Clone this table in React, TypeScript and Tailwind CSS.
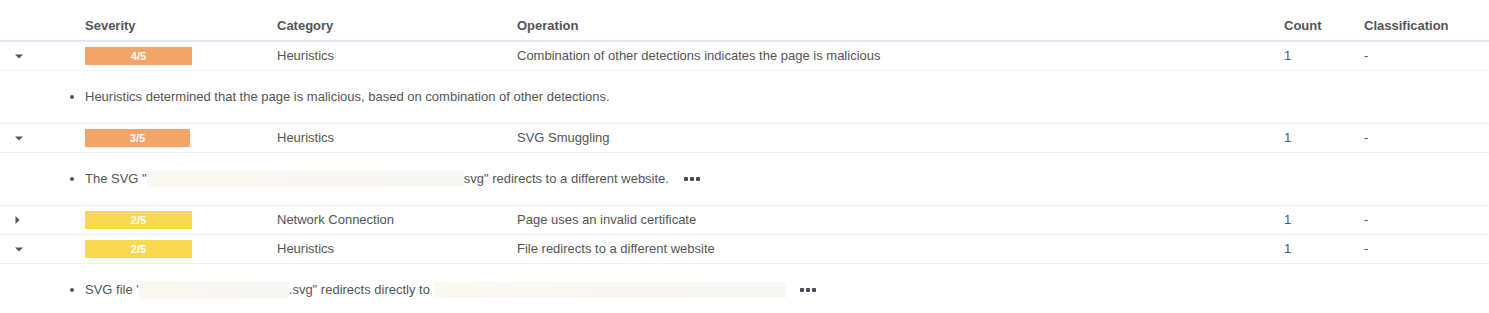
import React from 'react';

type Row = {
    severity: string;
    color: 'orange' | 'yellow';
    badgeWidth: string;
    category: string;
    operation: string;
    count: number;
    open: boolean;
    detail?: React.ReactNode;
};

const Redacted = ({ w }: { w: string }) => (
    <span className={`inline-block h-[16px] align-middle bg-gradient-to-r from-[#fbf8f1] via-[#f9f7f3] to-[#f7f7f6] ${w}`} />
);

const Dots = () => (
    <span className="inline-flex items-center gap-[2px] align-middle">
        <span className="w-[4px] h-[4px] rounded-[1px] bg-[#4a4a55]" />
        <span className="w-[4px] h-[4px] rounded-[1px] bg-[#4a4a55]" />
        <span className="w-[4px] h-[4px] rounded-[1px] bg-[#4a4a55]" />
    </span>
);

const rows: Row[] = [
    {
        severity: '4/5',
        color: 'orange',
        badgeWidth: 'w-[107px]',
        category: 'Heuristics',
        operation: 'Combination of other detections indicates the page is malicious',
        count: 1,
        open: true,
        detail: <span>Heuristics determined that the page is malicious, based on combination of other detections.</span>,
    },
    {
        severity: '3/5',
        color: 'orange',
        badgeWidth: 'w-[105px]',
        category: 'Heuristics',
        operation: 'SVG Smuggling',
        count: 1,
        open: true,
        detail: (
            <span className="flex items-center">
                <span>The SVG "</span>
                <Redacted w="w-[317px]" />
                <span>svg" redirects to a different website.</span>
                <span className="ml-[15px] flex"><Dots /></span>
            </span>
        ),
    },
    {
        severity: '2/5',
        color: 'yellow',
        badgeWidth: 'w-[107px]',
        category: 'Network Connection',
        operation: 'Page uses an invalid certificate',
        count: 1,
        open: false,
    },
    {
        severity: '2/5',
        color: 'yellow',
        badgeWidth: 'w-[107px]',
        category: 'Heuristics',
        operation: 'File redirects to a different website',
        count: 1,
        open: true,
        detail: (
            <span className="flex items-center">
                <span>SVG file '</span>
                <Redacted w="w-[150px] h-[18px]" />
                <span>.svg" redirects directly to&nbsp;</span>
                <Redacted w="w-[352px] h-[15px]" />
                <span className="ml-[14px] flex"><Dots /></span>
            </span>
        ),
    },
];

const Caret = ({ open }: { open: boolean }) =>
    open ? (
        <svg width="8" height="5" viewBox="0 0 8 5" className="ml-[15px]">
            <path d="M0 0.5 L8 0.5 L4 4.5 Z" fill="#555" />
        </svg>
    ) : (
        <svg width="5" height="8" viewBox="0 0 5 8" className="ml-[15px]">
            <path d="M0.5 0 L4.5 4 L0.5 8 Z" fill="#555" />
        </svg>
    );

const cols = 'grid grid-cols-[85px_192px_240px_767px_80px_1fr]';

export default function App() {
    return (
        <div className="w-[1489px] h-[313px] overflow-hidden bg-white text-[13px] text-[#555] font-['Liberation_Sans',Arial,sans-serif]">
            {/* header */}
            <div className={`${cols} h-[42px] border-b-2 border-[#e4e7f1] font-bold items-end pb-[6px] leading-[16px]`}>
                <div />
                <div>Severity</div>
                <div>Category</div>
                <div>Operation</div>
                <div>Count</div>
                <div>Classification</div>
            </div>

            {rows.map((r, i) => (
                <React.Fragment key={i}>
                    <div className={`${cols} h-[29px] border-b border-[#eef0f5] items-center`}>
                        <div className="flex items-center">
                            <Caret open={r.open} />
                        </div>
                        <div>
                            <div
                                className={`${r.badgeWidth} h-[18px] flex items-center justify-center text-white font-bold text-[11px] ${
                                    r.color === 'orange' ? 'bg-[#f2a469]' : 'bg-[#f9d94f]'
                                }`}
                            >
                                {r.severity}
                            </div>
                        </div>
                        <div>{r.category}</div>
                        <div>{r.operation}</div>
                        <div className="text-[#3f5488]">{r.count}</div>
                        <div>-</div>
                    </div>
                    {r.open && r.detail && (
                        <div className="h-[53px] border-b border-[#eef0f5] flex items-center pl-[70px]">
                            <span className="w-[4px] h-[4px] rounded-full bg-[#555] mr-[11px]" />
                            {r.detail}
                        </div>
                    )}
                </React.Fragment>
            ))}
        </div>
    );
}
